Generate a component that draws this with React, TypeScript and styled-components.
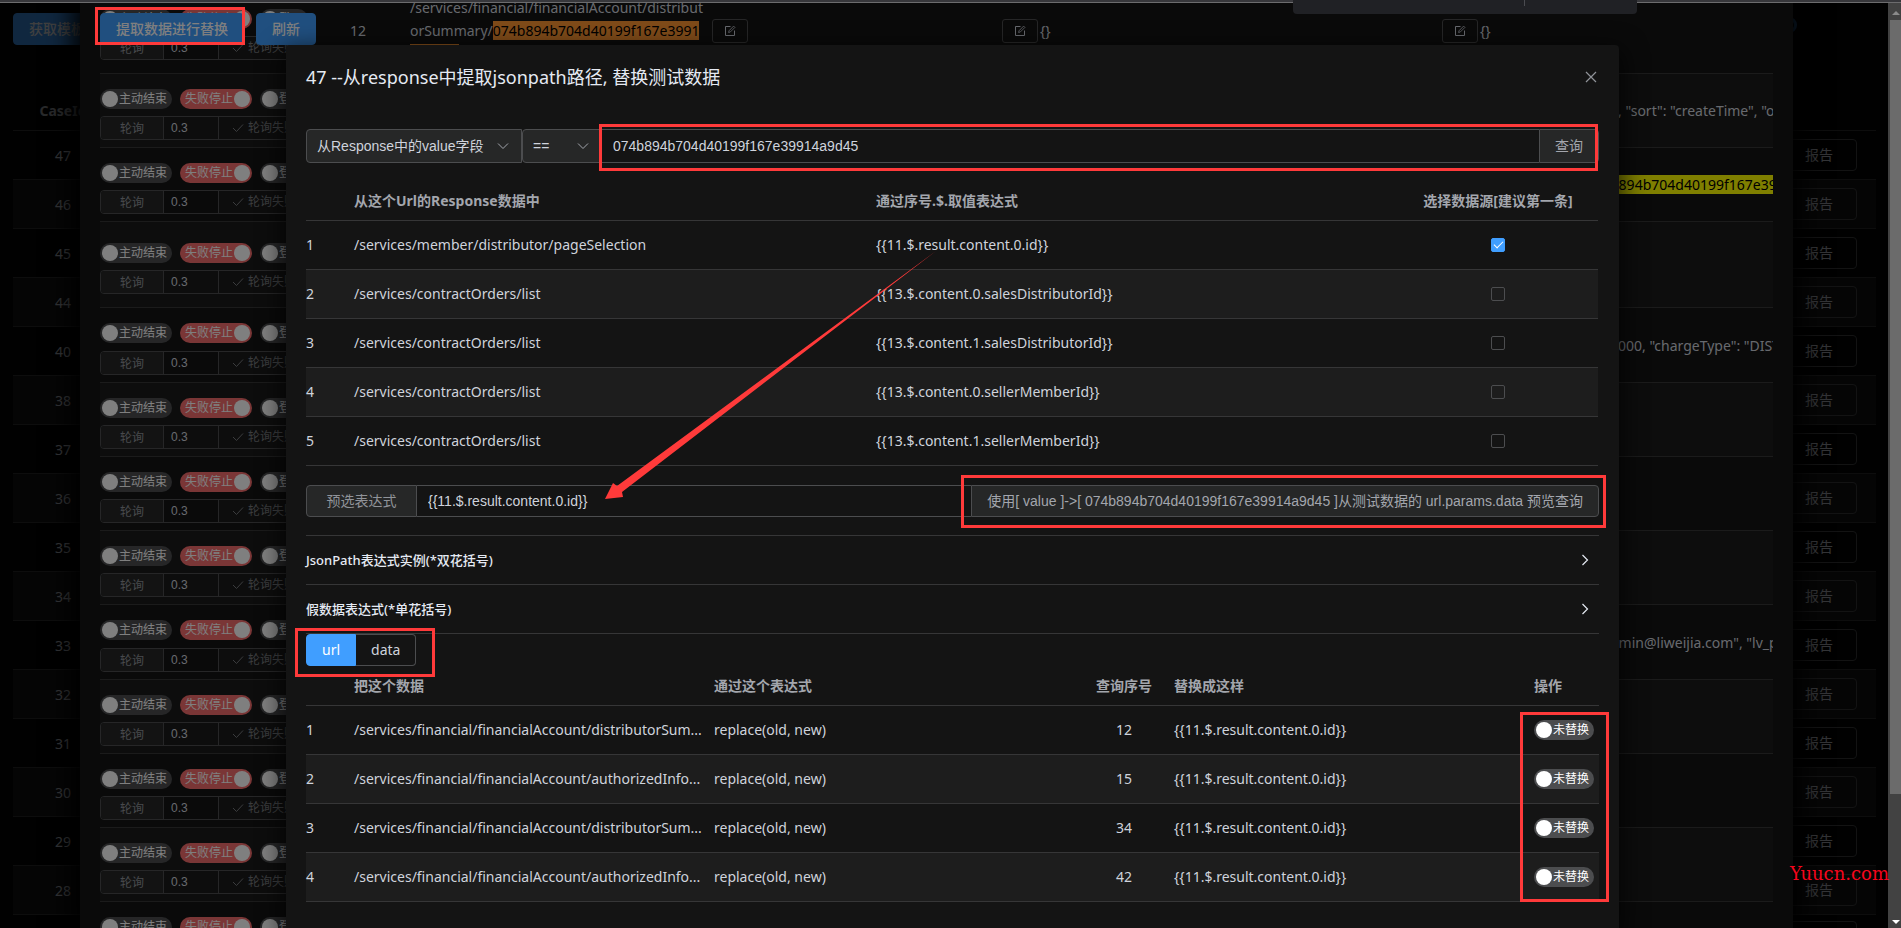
import React, { useState } from 'react';
import styled, { createGlobalStyle, css } from 'styled-components';

const uiFont = '"Noto Sans", "Noto Sans CJK SC", sans-serif';
const fieldFont = '"Liberation Sans", "Noto Sans CJK SC", sans-serif';

const c = {
  bg: '#141414',
  stripe: '#1d1d1d',
  fill: '#262727',
  border: '#4c4d4f',
  line: '#363637',
  title: '#e5eaf3',
  text: '#cfd3dc',
  muted: '#a3a6ad',
  faint: '#909399',
  disabled: '#77797d',
  primary: '#409eff',
  danger: '#f56c6c',
  mark: '#ff3a3a',
};

const GlobalStyle = createGlobalStyle`
  * { box-sizing: border-box; }
  body {
    margin: 0;
    background: #000;
    color: ${c.text};
    font-family: ${uiFont};
    font-size: 14px;
    line-height: 23px;
    overflow: hidden;
  }
  button, input, select { font: inherit; color: inherit; margin: 0; }
`;

/* ---------- window frame ---------- */

const Frame = styled.div`
  position: relative;
  display: flex;
  height: 100vh;
  overflow: hidden;
`;

const Viewport = styled.div`
  position: relative;
  flex: 1;
  min-width: 0;
  overflow: hidden;
`;

const TopStrip = styled.div`
  position: absolute;
  top: 0;
  left: 0;
  right: 0;
  height: 3px;
  background: #37373b;
  border-bottom: 1px solid #6c6c6e;
`;

const FloatingBar = styled.div`
  position: absolute;
  top: 0;
  right: 264px;
  width: 344px;
  height: 14px;
  display: flex;
  justify-content: flex-end;
  padding-right: 112px;
  background: #202125;
  border-radius: 0 0 4px 4px;
  &::after {
    content: '';
    width: 1px;
    height: 6px;
    background: #4a4b50;
  }
`;

const ScrollTrack = styled.div`
  display: flex;
  flex-direction: column;
  align-items: flex-end;
  justify-content: space-between;
  width: 13px;
  padding: 10px 0 3px 0;
  background: #424242;
`;

const ScrollThumb = styled.div`
  flex: 1;
  width: 11px;
  margin: 4px 0 125px 0;
  background: #6b6b6b;
`;

const Watermark = styled.div`
  position: absolute;
  right: 12px;
  bottom: 42px;
  font: 18px/24px "DejaVu Serif", serif;
  color: #f5051c;
`;

/* ---------- shared controls ---------- */

const Button = styled.button<{ $kind?: 'primary' | 'plain' }>`
  height: 32px;
  padding: 0 15px;
  border: 1px solid ${c.border};
  border-radius: 4px;
  background: transparent;
  color: ${c.text};
  line-height: 20px;
  white-space: nowrap;
  ${p => p.$kind === 'primary' && css`
    background: ${c.primary};
    border-color: ${c.primary};
    color: #fff;
    font-weight: 500;
  `}
`;

const IconButton = styled.button`
  display: flex;
  align-items: center;
  justify-content: center;
  flex: none;
  width: 36px;
  height: 24px;
  padding: 0;
  border: 1px solid ${c.border};
  border-radius: 3px;
  background: transparent;
  color: ${c.text};
`;

const SwitchTrack = styled.label<{ $on: boolean; $tone?: string }>`
  display: flex;
  flex: none;
  flex-direction: ${p => (p.$on ? 'row-reverse' : 'row')};
  align-items: center;
  width: fit-content;
  height: 20px;
  padding: ${p => (p.$on ? '0 2px 0 5px' : '0 5px 0 2px')};
  gap: 1px;
  border-radius: 10px;
  background: ${p => (p.$on ? p.$tone : c.border)};
  color: #fff;
  font-size: 12px;
  line-height: 20px;
  white-space: nowrap;
  input {
    appearance: none;
    width: 16px;
    height: 16px;
    border-radius: 50%;
    background: #fff;
  }
`;

function Switch({ text, initial = false, tone = c.primary }: { text: string; initial?: boolean; tone?: string }) {
  const [on, setOn] = useState(initial);
  return (
    <SwitchTrack $on={on} $tone={tone}>
      <input type="checkbox" role="switch" checked={on} onChange={() => setOn(!on)} />
      <span>{text}</span>
    </SwitchTrack>
  );
}

const CheckInput = styled.input`
  appearance: none;
  display: block;
  width: 14px;
  height: 14px;
  margin: 0 auto;
  border: 1px solid ${c.border};
  border-radius: 2px;
  background: transparent;
  &:checked {
    background: ${c.primary};
    border-color: ${c.primary};
  }
  &:checked::after {
    content: '';
    display: block;
    width: 4px;
    height: 8px;
    margin: 0 auto;
    border: solid #fff;
    border-width: 0 1px 1px 0;
    transform: rotate(45deg);
  }
`;

const EditIcon = () => (
  <svg width="12" height="12" viewBox="0 0 12 12" fill="none" stroke="currentColor">
    <path d="M6.5 1.5H1.5V10.5H10.5V5.5" />
    <path d="M4.6 7.5L5 5.8L9.6 1.1L10.9 2.4L6.3 7L4.6 7.5Z" strokeWidth="0.8" />
  </svg>
);

const Chevron = ({ dir = 'down' }: { dir?: 'down' | 'right' }) =>
  dir === 'down' ? (
    <svg width="12" height="12" viewBox="0 0 12 12" fill="none" stroke="currentColor">
      <path d="M1 3.5L6 8.5L11 3.5" />
    </svg>
  ) : (
    <svg width="12" height="12" viewBox="0 0 12 12" fill="none" stroke="currentColor" strokeWidth="1.2">
      <path d="M3.5 1L8.5 6L3.5 11" />
    </svg>
  );

const CheckIcon = () => (
  <svg width="12" height="12" viewBox="0 0 12 12" fill="none" stroke="currentColor">
    <path d="M1 6L4.5 9.5L11 2.5" />
  </svg>
);

/* A red frame drawn around the part it sits in */
const Mark = styled.span<{ $t: number; $r: number; $b: number; $l: number }>`
  position: absolute;
  top: ${p => -p.$t}px;
  right: ${p => -p.$r}px;
  bottom: ${p => -p.$b}px;
  left: ${p => -p.$l}px;
  border: 3px solid ${c.mark};
  pointer-events: none;
`;

const Marked = styled.div<{ $grow?: boolean }>`
  position: relative;
  display: flex;
  ${p => p.$grow && 'flex: 1; min-width: 0;'}
`;

/* ---------- case list page ---------- */

const Page = styled.main`
  display: flex;
  flex-direction: column;
  gap: 46px;
  height: 100%;
  padding: 13px 12px 0 13px;
  background: #040404;
`;

const PageBar = styled.div`
  display: flex;
  align-items: center;
  justify-content: space-between;
  padding-right: 79px;
`;

const RoundBadge = styled.span`
  width: 16px;
  height: 16px;
  margin-bottom: 8px;
  border: 3px solid ${c.primary};
  border-radius: 50%;
`;

const CaseTable = styled.table`
  width: 100%;
  table-layout: fixed;
  border-collapse: separate;
  border-spacing: 0;
  th, td {
    height: 49px;
    padding: 0;
    border-bottom: 1px solid ${c.line};
  }
  th { height: 40px; color: ${c.muted}; }
  td:last-child { padding-right: 19px; text-align: right; }
  td:last-child button { width: 76px; }
  td:first-child { text-align: center; }
  tbody tr:nth-child(even) { background: #161616; }
`;

const caseIds = [47, 46, 45, 44, 40, 38, 37, 36, 35, 34, 33, 32, 31, 30, 29, 28];

function CasePage() {
  return (
    <Page>
      <PageBar>
        <Button $kind="primary">获取模板数据</Button>
        <RoundBadge />
      </PageBar>
      <CaseTable>
        <colgroup>
          <col width="100" />
          <col />
          <col width="120" />
        </colgroup>
        <thead>
          <tr><th>CaseId</th><th /><th /></tr>
        </thead>
        <tbody>
          {caseIds.map(id => (
            <tr key={id}>
              <td>{id}</td>
              <td />
              <td><Button>报告</Button></td>
            </tr>
          ))}
          <tr>
            <td />
            <td />
            <td><Button aria-label="报告" /></td>
          </tr>
        </tbody>
      </CaseTable>
    </Page>
  );
}

/* ---------- overlays ---------- */

const Overlay = styled.div`
  position: absolute;
  inset: 0;
  display: flex;
  background: rgba(0, 0, 0, 0.5);
`;

const StepsDialog = styled.section`
  position: relative;
  flex: 1;
  min-width: 0;
  margin: 0 95px 0 80px;
  padding: 0 20px;
  background: ${c.bg};
  box-shadow: 0 0 24px 8px #000;
  overflow: hidden;
`;

const StepsBar = styled.div`
  position: absolute;
  top: 13px;
  left: 20px;
  display: flex;
  gap: 12px;
`;

/* Sits over both overlays so that it keeps its full colour */
const StepsMark = styled.span`
  position: absolute;
  top: 7px;
  left: 95px;
  width: 150px;
  height: 38px;
  border: 3px solid ${c.mark};
  pointer-events: none;
`;

const StepTable = styled.table`
  width: 100%;
  margin-top: -12px;
  table-layout: fixed;
  border-collapse: separate;
  border-spacing: 0;
  td {
    padding: 8px 0;
    border-bottom: 1px solid ${c.line};
  }
  tbody tr:nth-child(even) { background: #1b1b1b; }
`;

const StepRow = styled.tr<{ $h: number }>`
  height: ${p => p.$h}px;
`;

const SwitchLine = styled.div`
  display: flex;
  align-items: center;
  gap: 8px;
  height: 34px;
  padding-bottom: 1px;
  overflow: hidden;
`;

const PollGroup = styled.label`
  display: flex;
  height: 24px;
  border: 1px solid ${c.border};
  border-radius: 4px;
  color: ${c.faint};
  font: 12px/24px ${fieldFont};
  overflow: hidden;
  > span { width: 63px; text-align: center; background: ${c.fill}; }
  input {
    width: 56px;
    padding: 0 7px;
    border: solid ${c.border};
    border-width: 0 1px;
    background: transparent;
    color: ${c.text};
  }
  button {
    flex: 1;
    display: flex;
    align-items: center;
    gap: 4px;
    padding: 0 13px;
    border: 0;
    background: #1b1b1b;
    color: ${c.disabled};
    white-space: nowrap;
  }
`;

const ActionCell = styled.td`
  && { padding-bottom: 7px; }
`;

const IdCell = styled.td`
  text-align: center;
`;

const CellLine = styled.div<{ $indent?: boolean }>`
  display: flex;
  align-items: center;
  gap: 2px;
  padding-left: ${p => (p.$indent ? 4 : 0)}px;
  white-space: nowrap;
`;

const UrlText = styled.span`
  width: 300px;
`;

const Hit = styled.mark<{ $active?: boolean }>`
  background: ${p => (p.$active ? '#ff9632' : '#ffff00')};
  color: #000;
`;

const ClipCell = styled.td`
  overflow: hidden;
  white-space: nowrap;
`;

const steps: { h: number; first?: boolean; note?: React.ReactNode }[] = [
  { h: 86, first: true },
  { h: 74, note: '0, "sort": "createTime", "o' },
  { h: 74, note: <Hit>b894b704d40199f167e3991</Hit> },
  { h: 86 },
  { h: 75, note: '0000, "chargeType": "DIST' },
  { h: 74 },
  { h: 74 },
  { h: 74 },
  { h: 75, note: 'dmin@liweijia.com", "lv_pw' },
  { h: 74 },
  { h: 74 },
  { h: 74 },
  { h: 74 },
];

function StepsLayer() {
  return (
    <Overlay>
      <StepsDialog>
        <StepTable>
          <colgroup>
            <col width="210" />
            <col width="96" />
            <col width="596" />
            <col width="440" />
            <col width="168" />
            <col />
          </colgroup>
          <tbody>
            {steps.map((s, i) => (
              <StepRow key={i} $h={s.h}>
                <ActionCell>
                  <SwitchLine>
                    <Switch text="主动结束" />
                    <Switch text="失败停止" initial tone={c.danger} />
                    <Switch text="登录" />
                  </SwitchLine>
                  <PollGroup>
                    <span>轮询</span>
                    <input type="text" defaultValue="0.3" />
                    <button type="button"><CheckIcon />轮询失败</button>
                  </PollGroup>
                </ActionCell>
                <IdCell>{s.first && '12'}</IdCell>
                <td>
                  {s.first && (
                    <CellLine $indent>
                      <UrlText>
                        /services/financial/financialAccount/distribut<br />
                        orSummary/<Hit $active>074b894b704d40199f167e3991</Hit><br />
                        <Hit $active>4a9d45</Hit>
                      </UrlText>
                      <IconButton aria-label="编辑地址"><EditIcon /></IconButton>
                    </CellLine>
                  )}
                </td>
                <td>{s.first && <CellLine><IconButton aria-label="编辑参数"><EditIcon /></IconButton>{'{}'}</CellLine>}</td>
                <td>{s.first && <CellLine><IconButton aria-label="编辑数据"><EditIcon /></IconButton>{'{}'}</CellLine>}</td>
                <ClipCell>{s.note}</ClipCell>
              </StepRow>
            ))}
          </tbody>
        </StepTable>
        <StepsBar>
          <Button $kind="primary">提取数据进行替换</Button>
          <Button $kind="primary">刷新</Button>
        </StepsBar>
      </StepsDialog>
    </Overlay>
  );
}

/* ---------- replace dialog ---------- */

const ReplaceDialog = styled.section`
  position: relative;
  flex: 1;
  min-width: 0;
  margin: 45px 269px 0 286px;
  padding: 0 20px;
  border-radius: 4px 4px 0 0;
  background: ${c.bg};
  box-shadow: 0 8px 24px 4px rgba(0, 0, 0, 0.7);
`;

const DialogHead = styled.header`
  display: flex;
  align-items: center;
  justify-content: space-between;
  height: 64px;
  margin-bottom: 20px;
  h2 {
    margin: 0;
    color: ${c.title};
    font-size: 18px;
    font-weight: 400;
    line-height: 24px;
  }
  button {
    display: flex;
    padding: 0 2px;
    border: 0;
    background: none;
    color: ${c.faint};
  }
`;

const FieldRow = styled.div`
  display: flex;
  height: 34px;
  border-radius: 4px;
  font-family: ${fieldFont};
`;

const SelectBox = styled.div<{ $w: number }>`
  position: relative;
  width: ${p => p.$w}px;
  select {
    appearance: none;
    width: 100%;
    height: 100%;
    padding: 0 10px;
    border: 1px solid ${c.border};
    border-radius: 4px 0 0 4px;
    background: ${c.fill};
    color: ${c.text};
  }
  svg {
    position: absolute;
    right: 13px;
    top: 11px;
    color: ${c.muted};
    pointer-events: none;
  }
`;

const FieldInput = styled.input`
  flex: 1;
  min-width: 0;
  padding: 0 11px;
  border: 1px solid ${c.border};
  border-width: 1px 0;
  background: transparent;
  color: ${c.text};
`;

const FieldButton = styled.button`
  padding: 0 15px;
  border: 1px solid ${c.border};
  border-radius: 0 4px 4px 0;
  background: ${c.fill};
  color: ${c.muted};
  white-space: nowrap;
`;

const FieldLabel = styled.label`
  width: 111px;
  border: 1px solid ${c.border};
  border-radius: 4px 0 0 4px;
  background: ${c.fill};
  color: ${c.faint};
  line-height: 30px;
  text-align: center;
`;

const PresetRow = styled(FieldRow)`
  height: 32px;
  margin: 19px 0 18px;
`;

const DataTable = styled.table`
  width: 100%;
  table-layout: fixed;
  border-collapse: separate;
  border-spacing: 0;
  th, td {
    height: 49px;
    padding: 0 0 1px;
    border-bottom: 1px solid ${c.line};
    text-align: left;
    white-space: nowrap;
  }
  th { height: 40px; color: ${c.muted}; font-weight: 700; }
  td { color: ${c.text}; }
  .mid { text-align: center; }
  tbody tr:nth-child(even) { background: ${c.stripe}; }
`;

const SourceBlock = styled.div`
  padding: 18px 1px 0 0;
`;

const Collapse = styled.div`
  border-top: 1px solid ${c.line};
`;

const CollapseHead = styled.button`
  display: flex;
  align-items: center;
  justify-content: space-between;
  width: 100%;
  height: 49px;
  padding: 0 8px 0 0;
  border: 0;
  border-bottom: 1px solid ${c.line};
  background: none;
  color: ${c.title};
  font-size: 13px;
  font-weight: 500;
`;

const TabLine = styled.div`
  display: flex;
`;

const TabButton = styled.button<{ $on: boolean }>`
  height: 32px;
  padding: 0 15px;
  border: 1px solid ${p => (p.$on ? c.primary : c.border)};
  background: ${p => (p.$on ? c.primary : 'transparent')};
  color: ${p => (p.$on ? '#fff' : c.text)};
  line-height: 20px;
  &:first-child { border-radius: 4px 0 0 4px; }
  &:last-of-type { border-radius: 0 4px 4px 0; border-left: 0; }
`;

const ReplaceBlock = styled.div`
  position: relative;
`;

/* Frame over the operation column, from the header line to the last row */
const ColumnMark = styled.span`
  position: absolute;
  top: 46px;
  right: -10px;
  bottom: 0;
  width: 89px;
  border: 3px solid ${c.mark};
  pointer-events: none;
`;

const ArrowLayer = styled.svg`
  position: absolute;
  top: 0;
  left: 0;
  pointer-events: none;
`;

const sources = [
  ['/services/member/distributor/pageSelection', '{{11.$.result.content.0.id}}'],
  ['/services/contractOrders/list', '{{13.$.content.0.salesDistributorId}}'],
  ['/services/contractOrders/list', '{{13.$.content.1.salesDistributorId}}'],
  ['/services/contractOrders/list', '{{13.$.content.0.sellerMemberId}}'],
  ['/services/contractOrders/list', '{{13.$.content.1.sellerMemberId}}'],
];

const replacements: [string, number][] = [
  ['/services/financial/financialAccount/distributorSum...', 12],
  ['/services/financial/financialAccount/authorizedInfo...', 15],
  ['/services/financial/financialAccount/distributorSum...', 34],
  ['/services/financial/financialAccount/authorizedInfo...', 42],
];

function ReplaceLayer() {
  const [picked, setPicked] = useState(0);
  const [tab, setTab] = useState('url');
  return (
    <Overlay>
      <ReplaceDialog role="dialog" aria-labelledby="replace-title">
        <DialogHead>
          <h2 id="replace-title">47 --从response中提取jsonpath路径, 替换测试数据</h2>
          <button aria-label="关闭">
            <svg width="12" height="12" viewBox="0 0 12 12" stroke="currentColor" strokeWidth="1.2">
              <path d="M1 1L11 11M11 1L1 11" />
            </svg>
          </button>
        </DialogHead>

        <FieldRow>
          <SelectBox $w={216}>
            <select aria-label="查询范围"><option>从Response中的value字段</option></select>
            <Chevron />
          </SelectBox>
          <SelectBox $w={80}>
            <select aria-label="比较方式"><option>==</option></select>
            <Chevron />
          </SelectBox>
          <Marked $grow>
            <FieldInput type="text" aria-label="查询值" defaultValue="074b894b704d40199f167e39914a9d45" />
            <FieldButton>查询</FieldButton>
            <Mark $t={5} $r={-1} $b={8} $l={3} />
          </Marked>
        </FieldRow>

        <SourceBlock>
          <DataTable>
            <colgroup>
              <col width="48" />
              <col />
              <col />
              <col width="200" />
            </colgroup>
            <thead>
              <tr>
                <th />
                <th>从这个Url的Response数据中</th>
                <th>通过序号.$.取值表达式</th>
                <th className="mid">选择数据源[建议第一条]</th>
              </tr>
            </thead>
            <tbody>
              {sources.map(([url, expr], i) => (
                <tr key={i}>
                  <td>{i + 1}</td>
                  <td>{url}</td>
                  <td>{expr}</td>
                  <td className="mid">
                    <CheckInput
                      type="checkbox"
                      aria-label={`选择数据源 ${i + 1}`}
                      checked={picked === i}
                      onChange={() => setPicked(i)}
                    />
                  </td>
                </tr>
              ))}
            </tbody>
          </DataTable>
        </SourceBlock>

        <PresetRow>
          <FieldLabel htmlFor="preset">预选表达式</FieldLabel>
          <FieldInput id="preset" type="text" defaultValue="{{11.$.result.content.0.id}}" />
          <Marked>
            <FieldButton>
              使用[ value ]-&gt;[ 074b894b704d40199f167e39914a9d45 ]从测试数据的 url.params.data 预览查询
            </FieldButton>
            <Mark $t={10} $r={7} $b={11} $l={10} />
          </Marked>
        </PresetRow>

        <Collapse>
          <CollapseHead>JsonPath表达式实例(*双花括号)<Chevron dir="right" /></CollapseHead>
          <CollapseHead>假数据表达式(*单花括号)<Chevron dir="right" /></CollapseHead>
        </Collapse>

        <TabLine>
          <Marked>
            {['url', 'data'].map(name => (
              <TabButton key={name} $on={tab === name} onClick={() => setTab(name)}>{name}</TabButton>
            ))}
            <Mark $t={6} $r={19} $b={11} $l={11} />
          </Marked>
        </TabLine>

        <ReplaceBlock>
          <DataTable>
            <colgroup>
              <col width="48" />
              <col />
              <col />
              <col width="100" />
              <col />
              <col width="65" />
            </colgroup>
            <thead>
              <tr>
                <th />
                <th>把这个数据</th>
                <th>通过这个表达式</th>
                <th className="mid">查询序号</th>
                <th>替换成这样</th>
                <th>操作</th>
              </tr>
            </thead>
            <tbody>
              {replacements.map(([url, no], i) => (
                <tr key={no}>
                  <td>{i + 1}</td>
                  <td>{url}</td>
                  <td>replace(old, new)</td>
                  <td className="mid">{no}</td>
                  <td>{'{{11.$.result.content.0.id}}'}</td>
                  <td><Switch text="未替换" /></td>
                </tr>
              ))}
            </tbody>
          </DataTable>
          <ColumnMark />
        </ReplaceBlock>

        <ArrowLayer width="700" height="470" viewBox="0 0 700 470">
          <polygon
            fill={c.mark}
            points="650,206 331,441 327,438 319,454 337,452 336,447"
          />
        </ArrowLayer>
      </ReplaceDialog>
    </Overlay>
  );
}

export default function App() {
  return (
    <>
      <GlobalStyle />
      <Frame>
        <Viewport>
          <CasePage />
          <StepsLayer />
          <ReplaceLayer />
          <StepsMark />
        </Viewport>
        <ScrollTrack>
          <svg width="10" height="6" viewBox="0 0 10 6"><path d="M1 5L5 1L9 5Z" fill="#8a8a8a" /></svg>
          <ScrollThumb />
          <svg width="10" height="6" viewBox="0 0 10 6"><path d="M1 1L5 5L9 1Z" fill="#fff" /></svg>
        </ScrollTrack>
        <TopStrip />
        <FloatingBar />
        <Watermark>Yuucn.com</Watermark>
      </Frame>
    </>
  );
}
